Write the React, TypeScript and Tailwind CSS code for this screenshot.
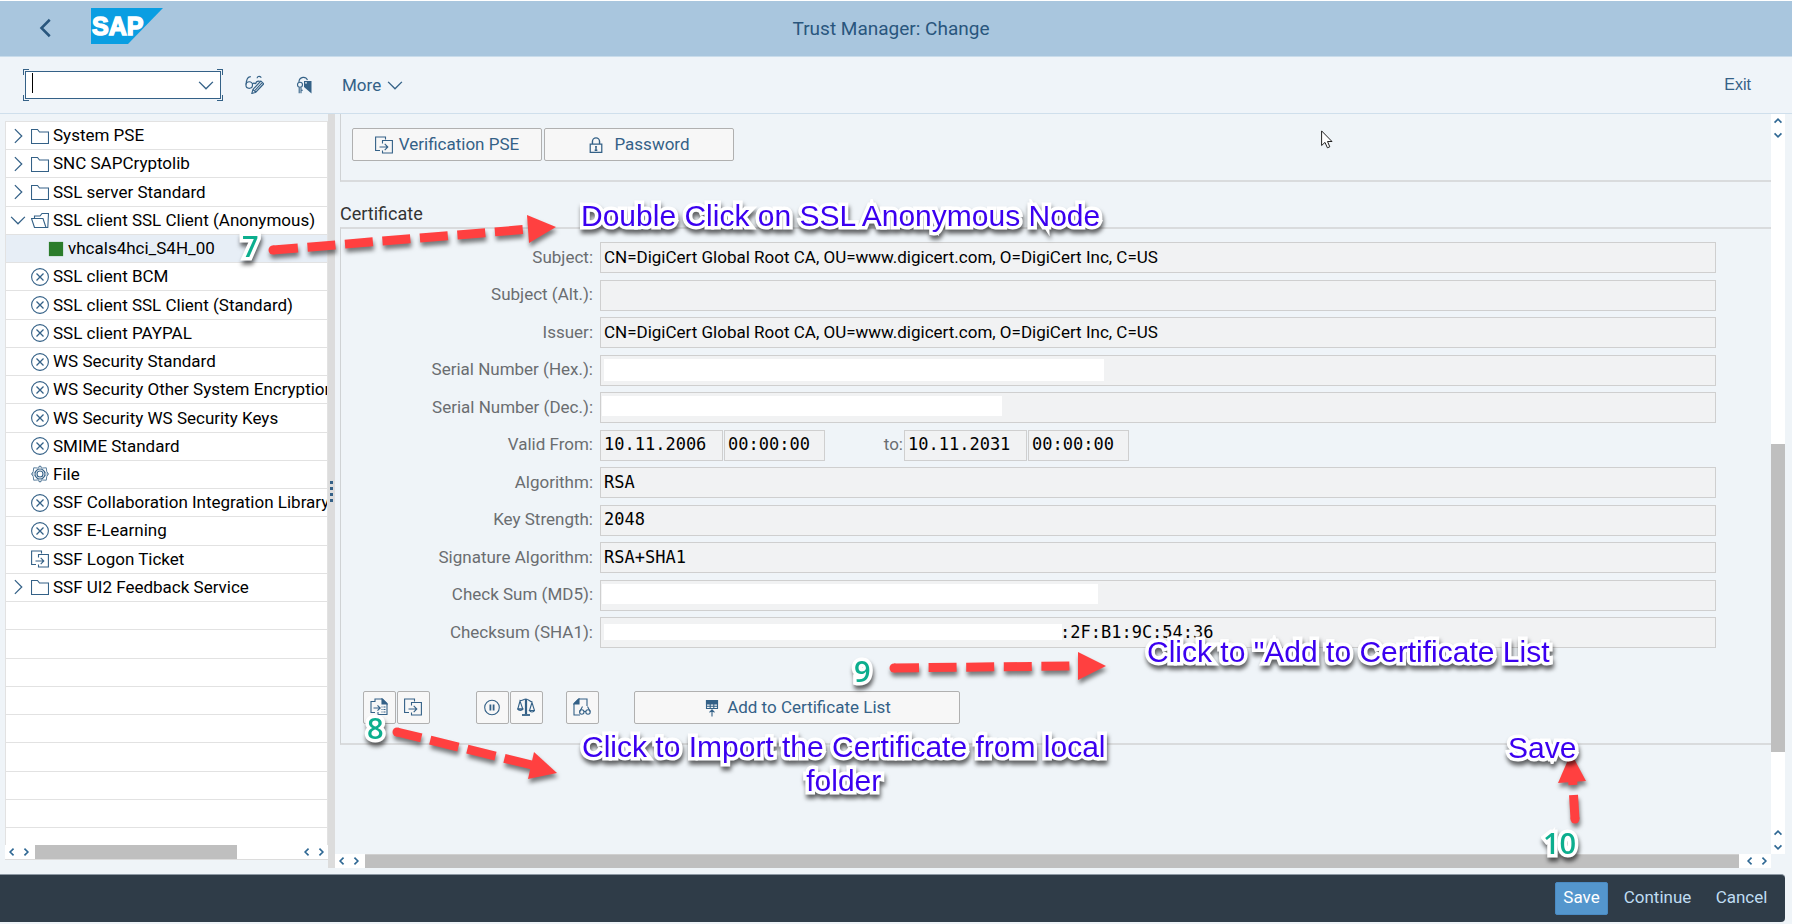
import React from 'react';

type IconName =
  | 'folder' | 'folderOpen' | 'cross' | 'file' | 'import' | 'square'
  | 'lock' | 'importDoc' | 'pause' | 'scale' | 'docGlasses' | 'addList' | 'glassesPen' | 'keyTag';

function Icon({ name, className = 'size-[18px]' }: { name: IconName; className?: string }) {
  const shapes: Record<IconName, React.ReactNode> = {
    folder: <path d="M.5 16.500V2.500H6.500L8.500 5H17.500V16.500Z" />,
    folderOpen: <path d="M3.500 16.500L.5 7.500H12L15 16.500ZM3.500 7.500V5H9L11 2.500H17.500L16.800 16.500H15" />,
    cross: (
      <>
        <circle cx="9" cy="9" r="8.400" />
        <path d="M5.500 5.500l7 7M12.500 5.500l-7 7" strokeWidth="1.300" />
      </>
    ),
    file: (
      <>
        <circle cx="9" cy="9" r="3" />
        <circle cx="9" cy="9" r="5" />
        <path d="M9 .8l2.500 2.200 3.800-.2.400 3.600 1.800 2.600-1.800 2.600-.4 3.600-3.800-.2L9 17.200l-2.500-2.200-3.800.2-.4-3.600L.5 9l1.800-2.600.4-3.600 3.800.2z" strokeWidth=".8" />
        <path d="M9 1l3.400 5L17 9l-4.600 3L9 17l-3.400-5L1 9l4.600-3z" strokeWidth=".5" />
      </>
    ),
    import: (
      <>
        <path d="M5 14.500H.6V1H10.500V3.500" />
        <path d="M7.500 7.500V4.500H17.400V17H7.500V14.500" />
        <path d="M4.500 11H12.500M9.700 7.800L12.800 11 9.700 14.200" />
      </>
    ),
    square: <rect x="1" y="1" width="16" height="16" fill="#2b7c2b" stroke="none" />,
    lock: (
      <>
        <path d="M2.500 8h13v9.300h-13z" strokeWidth="1.400" />
        <path d="M5 8V5a4 4 0 0 1 8 0v3" strokeWidth="1.600" />
        <path d="M9 10.800v4M7.500 15h3M8 11h2" strokeWidth="1.600" />
      </>
    ),
    importDoc: (
      <>
        <path d="M5 14.500H1V3.500H5V1H12.500L17 5.500V16.500H8V14" />
        <path d="M12 1v5h5z" fill="currentColor" />
        <path d="M3.500 10H10M7.500 7.300L10.200 10 7.500 12.700M11.500 9h1M13.500 9h2M11.500 11.500h1M13.500 11.500h2M11.500 14h1M13.500 14h2" />
      </>
    ),
    pause: (
      <>
        <circle cx="9" cy="9.500" r="7.300" />
        <path d="M7.400 6.500v6M10.600 6.500v6" strokeWidth="1.800" />
      </>
    ),
    scale: (
      <>
        <path d="M9 1v15" strokeWidth="2.200" />
        <path d="M5 17h8" strokeWidth="1.800" />
        <path d="M2.500 2.500c2 .8 4-1.500 6.500-1.500s4 3 6.500 3M3 3L.8 11h5zM15 4.500l-2.500 8h5z" />
        <path d="M.8 11a2.600 2 0 0 0 5 0zM12.500 12.500a2.600 2 0 0 0 5 0z" />
      </>
    ),
    docGlasses: (
      <>
        <path d="M7 17H1V5.500L5.500 1H14V8" />
        <path d="M1 6h5V1z" fill="currentColor" />
        <circle cx="8.800" cy="14" r="2.200" />
        <circle cx="15" cy="14" r="2.200" />
        <path d="M11 13.500h2M6.800 13.500L9.500 8.500M17.200 13.500L14.500 8.500" />
      </>
    ),
    addList: (
      <>
        <path d="M3.500 1.500h11v8h-11z" />
        <path d="M3.500 1.500h11V5h-11z" fill="currentColor" />
        <path d="M3.500 7.300h11M7.200 5v4.500M10.800 5v4.500M9 17.500V10.500M6.500 13.300L9 10.800l2.500 2.500" />
      </>
    ),
    glassesPen: (
      <>
        <circle cx="4" cy="9.500" r="3.100" />
        <path d="M1 9C1.200 5 2.500 1.500 5.500 1.500M7 8.500c1-1 2-1 3 0M10 8.500c.5-2 2-3 4-2.500M15.500 2.500C13.500.5 11.500 1.500 11.500 3" />
        <path d="M6.500 17.500l1-3.800 7.500-8 2.800 2.600-7.600 8zM7.500 13.700l2.700 2.600M9.500 14.500l6.800-7.200" />
      </>
    ),
    keyTag: (
      <>
        <path d="M4 6V5A4.500 4.500 0 0 1 12.500 4" />
        <circle cx="5" cy="8.800" r="2.500" />
        <path d="M4.200 11.500V17.300M6 11.500V17.300M6 14.300h1.800" />
        <path d="M9 5h7.500v12.500L9 11z" fill="currentColor" stroke="none" />
        <circle cx="11" cy="6.800" r=".9" fill="#eff4f9" stroke="none" />
      </>
    ),
  };
  return (
    <svg viewBox="0 0 18 18" className={`${className} shrink-0`} fill="none" stroke="currentColor" strokeWidth="1.100" aria-hidden="true">
      {shapes[name]}
    </svg>
  );
}

const chevronPaths = {
  left: 'M10.500 2.500L5 8l5.500 5.500',
  right: 'M5.500 2.500L11 8l-5.500 5.500',
  up: 'M2.500 10.500L8 5l5.500 5.500',
  down: 'M2.500 5.500L8 11l5.500-5.500',
};

function Chevron({ dir, className, width = 1.2 }: { dir: keyof typeof chevronPaths; className: string; width?: number }) {
  return (
    <svg viewBox="0 0 16 16" className={className} fill="none" stroke="currentColor" strokeWidth={width} aria-hidden="true">
      <path d={chevronPaths[dir]} />
    </svg>
  );
}

function ScrollButton({ dir }: { dir: keyof typeof chevronPaths }) {
  return (
    <button type="button" aria-label={`Scroll ${dir}`} className="flex size-[14px] shrink-0 items-center justify-center text-[#2f6894]">
      <Chevron dir={dir} className="size-[10px]" width={2.6} />
    </button>
  );
}

type Node = { label: string; icon: IconName; state?: 'open' | 'closed'; child?: boolean };

const nodes: Node[] = [
  { label: 'System PSE', icon: 'folder', state: 'closed' },
  { label: 'SNC SAPCryptolib', icon: 'folder', state: 'closed' },
  { label: 'SSL server Standard', icon: 'folder', state: 'closed' },
  { label: 'SSL client SSL Client (Anonymous)', icon: 'folderOpen', state: 'open' },
  { label: 'vhcals4hci_S4H_00', icon: 'square', child: true },
  { label: 'SSL client BCM', icon: 'cross' },
  { label: 'SSL client SSL Client (Standard)', icon: 'cross' },
  { label: 'SSL client PAYPAL', icon: 'cross' },
  { label: 'WS Security Standard', icon: 'cross' },
  { label: 'WS Security Other System Encryption', icon: 'cross' },
  { label: 'WS Security WS Security Keys', icon: 'cross' },
  { label: 'SMIME Standard', icon: 'cross' },
  { label: 'File', icon: 'file' },
  { label: 'SSF Collaboration Integration Library', icon: 'cross' },
  { label: 'SSF E-Learning', icon: 'cross' },
  { label: 'SSF Logon Ticket', icon: 'import' },
  { label: 'SSF UI2 Feedback Service', icon: 'folder', state: 'closed' },
];

const blankRows = Array.from({ length: 9 }, (_, i) => i);

function Tree() {
  return (
    <nav aria-label="Certificate stores" className="flex w-[328px] shrink-0 flex-col pt-[7px] pb-2 pl-[5px]">
      <ul className="grid flex-1 grid-rows-[repeat(25,minmax(28px,1fr))_18px] border-x border-[#e2e2e2] bg-white">
        {nodes.map((n) => (
          <li
            key={n.label}
            className={`flex min-w-0 items-center overflow-hidden border-t border-[#e2e2e2] text-black ${n.child ? 'bg-[#e7eef6]' : ''}`}
          >
            {n.state ? (
              <button type="button" aria-label={`Toggle ${n.label}`} className="mr-[2px] flex w-[23px] shrink-0 justify-center text-[#346187]">
                <Chevron dir={n.state === 'open' ? 'down' : 'right'} className="size-5 shrink-0" width={1} />
              </button>
            ) : (
              <span className={n.child ? 'w-[42px] shrink-0' : 'w-[25px] shrink-0'} />
            )}
            <span className="flex items-center gap-1 text-[#346187]">
              <Icon name={n.icon} className={n.child ? 'size-4' : 'size-[18px]'} />
              <a href="#" className="pb-px whitespace-nowrap text-black">{n.label}</a>
            </span>
          </li>
        ))}
        {blankRows.map((i) => (
          <li key={i} className="border-t border-[#e2e2e2]" />
        ))}
      </ul>
      <div className="flex h-[15px] border-b border-[#dcdcdc] bg-white">
        <ScrollButton dir="left" />
        <ScrollButton dir="right" />
        <div className="ml-[2px] flex flex-1">
          <div className="grow-[202] bg-[#bfbfbf]" />
          <div className="grow-[63]" />
        </div>
        <ScrollButton dir="left" />
        <ScrollButton dir="right" />
      </div>
    </nav>
  );
}

const btn = 'flex h-[33px] items-center justify-center rounded-[2px] border border-[#b0b0b0] bg-[#f7f7f7] text-[#346187]';
const fieldCls =
  'block h-[31px] w-full border border-[#cfcfcf] bg-[#f1f2f3] px-[3px] pb-[2px] text-black outline-none';
const labelCls = 'shrink-0 pb-[2px] text-right text-[#6a6d70]';
const mono = "font-['DejaVu_Sans_Mono',monospace]";

type FieldProps = { id: string; label: string; value?: string; monospace?: boolean; mask?: string; pad?: string };

function Field({ id, label, value = '', monospace, mask, pad = '' }: FieldProps) {
  return (
    <div className="flex h-[31px] items-center gap-[7px]">
      <label htmlFor={id} className={`${labelCls} w-[252px]`}>{label}</label>
      <div className="relative flex-1">
        <input id={id} readOnly value={value} className={`${fieldCls} ${monospace ? mono : ''} ${pad}`} />
        {mask && <span className={`absolute bg-white ${mask}`} />}
      </div>
    </div>
  );
}

function ValidityField({ label, value, width }: { label: string; value: string; width: string }) {
  return <input aria-label={label} readOnly value={value} className={`${fieldCls} ${mono} ${width}`} />;
}

function Validity() {
  return (
    <div className="flex h-[31px] items-center gap-[7px]">
      <label htmlFor="valid-from" className={`${labelCls} w-[252px]`}>Valid From:</label>
      <div className="flex items-center gap-px">
        <input id="valid-from" readOnly value="10.11.2006" className={`${fieldCls} ${mono} max-w-[123px]`} />
        <ValidityField label="Valid from time" value="00:00:00" width="max-w-[101px]" />
        <label htmlFor="valid-to" className={`${labelCls} w-[77px]`}>to:</label>
        <input id="valid-to" readOnly value="10.11.2031" className={`${fieldCls} ${mono} max-w-[123px]`} />
        <ValidityField label="Valid to time" value="00:00:00" width="max-w-[101px]" />
      </div>
    </div>
  );
}

function IconButton({ name, label, className = '' }: { name: IconName; label: string; className?: string }) {
  return (
    <button type="button" aria-label={label} className={`${btn} w-[33px] pr-[2px] pb-[2px] ${className}`}>
      <Icon name={name} />
    </button>
  );
}

const subject = 'CN=DigiCert Global Root CA, OU=www.digicert.com, O=DigiCert Inc, C=US';

function Details() {
  return (
    <div className="flex min-w-0 flex-1 flex-col">
      <div className="flex flex-1">
        <main className="flex-1 pl-[5px]">
          <section className="flex gap-[2px] border-b-2 border-l border-b-[#d9dbdd] border-l-[#cfd2d4] pt-[14px] pb-[19px] pl-[11px]">
            <button type="button" className={`${btn} w-[190px] gap-[6px]`}>
              <Icon name="import" /><span className="pb-[2px]">Verification PSE</span>
            </button>
            <button type="button" className={`${btn} w-[190px] gap-[10px]`}>
              <Icon name="lock" className="size-4" /><span className="pb-[2px]">Password</span>
            </button>
          </section>
          <h2 className="h-[45px] pt-5 text-[18px] leading-6 text-[#333]">Certificate</h2>
          <section className="border-y-2 border-l border-y-[#d9dbdd] border-l-[#cfd2d4] pt-[13px] pb-[19px]">
            <form className="flex min-h-[406px] flex-col justify-between pr-[55px]">
              <Field id="subject" label="Subject:" value={subject} />
              <Field id="subject-alt" label="Subject (Alt.):" />
              <Field id="issuer" label="Issuer:" value={subject} />
              <Field id="serial-hex" label="Serial Number (Hex.):" mask="top-1 left-1 h-[22px] w-[500px]" />
              <Field id="serial-dec" label="Serial Number (Dec.):" mask="top-1 left-[2px] h-5 w-[400px]" />
              <Validity />
              <Field id="algorithm" label="Algorithm:" value="RSA" monospace />
              <Field id="key-strength" label="Key Strength:" value="2048" monospace />
              <Field id="signature" label="Signature Algorithm:" value="RSA+SHA1" monospace />
              <Field id="md5" label="Check Sum (MD5):" mask="top-1 left-[2px] h-5 w-[496px]" />
              <Field id="sha1" label="Checksum (SHA1):" value=":2F:B1:9C:54:36" monospace mask="top-[7px] left-1 h-4 w-[458px]" pad="pl-[459px]" />
            </form>
            <div className="mt-[43px] flex pl-[22px]">
              <IconButton name="importDoc" label="Import certificate" />
              <IconButton name="import" label="Export certificate" className="ml-px" />
              <IconButton name="pause" label="Pause" className="ml-[46px]" />
              <IconButton name="scale" label="Compare" className="ml-px" />
              <IconButton name="docGlasses" label="Display certificate" className="ml-[23px]" />
              <button type="button" className={`${btn} ml-[35px] w-[326px] gap-[6px]`}>
                <Icon name="addList" /><span className="pb-[2px]">Add to Certificate List</span>
              </button>
            </div>
          </section>
        </main>
        <div className="flex w-[14px] flex-col bg-white">
          <ScrollButton dir="up" />
          <ScrollButton dir="down" />
          <div className="grow-[302]" />
          <div className="grow-[308] bg-[#bfbfbf]" />
          <div className="grow-[74]" />
          <ScrollButton dir="up" />
          <ScrollButton dir="down" />
        </div>
      </div>
      <div className="mr-[14px] flex h-[14px] bg-white">
        <ScrollButton dir="left" />
        <ScrollButton dir="right" />
        <div className="mr-1 ml-[2px] flex-1 border-t border-[#cfcfcf] bg-[#bfbfbf]" />
        <ScrollButton dir="left" />
        <ScrollButton dir="right" />
      </div>
    </div>
  );
}

function CommandField() {
  const corner = 'absolute size-[6px] border-[#346187]';
  return (
    <div className="relative ml-[23px] flex h-[32px] w-[200px] shrink-0 p-[2px]">
      <div className="flex min-w-0 flex-1 items-center border border-[#346187] bg-white">
        <span className="mt-px ml-[6px] h-5 w-px self-start bg-black" />
        <input aria-label="Command" className="w-full min-w-0 flex-1 bg-transparent outline-none" />
        <button type="button" aria-label="Open command list" className="mr-1 shrink-0 text-[#346187]">
          <Chevron dir="down" className="size-5" width={1.1} />
        </button>
      </div>
      <span className={`${corner} top-0 left-0 border-t border-l`} />
      <span className={`${corner} top-0 right-0 border-t border-r`} />
      <span className={`${corner} bottom-0 left-0 border-b border-l`} />
      <span className={`${corner} right-0 bottom-0 border-r border-b`} />
    </div>
  );
}

type ArrowSpec = { x1: number; y1: number; x2: number; y2: number; dash: string; offset: number; head: string };

const arrows: ArrowSpec[] = [
  { x1: 273, y1: 250, x2: 530, y2: 229, dash: '28 9.600', offset: 3, head: '527,215 556,227 529,243' },
  { x1: 397, y1: 732, x2: 532, y2: 765, dash: '29 9.200', offset: 4, head: '534,752 557,773 528,779' },
  { x1: 894, y1: 668, x2: 1070, y2: 666, dash: '28 9.600', offset: 3, head: '1078,652 1106,666 1078,680' },
  { x1: 1575, y1: 819, x2: 1572, y2: 770, dash: '28 10', offset: 4, head: '1558,783 1571,753 1586,781' },
];

function Callout({ children, className }: { children: React.ReactNode; className: string }) {
  return (
    <p
      className={`absolute text-center whitespace-nowrap [-webkit-text-stroke:7px_white] [paint-order:stroke_fill] [filter:drop-shadow(1px_4px_2px_rgba(0,0,0,.6))] [stroke-linejoin:round] ${className}`}
    >
      {children}
    </p>
  );
}

function Annotations() {
  const note = "font-['Liberation_Sans',Arial,sans-serif] text-[30px] leading-[34px] text-[#3b00f0]";
  const step = "font-['Open_Sans',sans-serif] text-[29px] leading-[34px] font-semibold text-[#0cae8e]";
  return (
    <div className="pointer-events-none absolute inset-0 overflow-hidden">
      <svg className="absolute inset-0 size-full [filter:drop-shadow(1px_4px_2px_rgba(0,0,0,.5))]" aria-hidden="true">
        {arrows.map((a) => (
          <g key={a.head} fill="#ff4040" stroke="#ff4040">
            <circle cx={a.x1} cy={a.y1} r="4.500" stroke="none" />
            <line x1={a.x1} y1={a.y1} x2={a.x2} y2={a.y2} strokeWidth="9" strokeDasharray={a.dash} strokeDashoffset={a.offset} />
            <polygon points={a.head} stroke="none" />
          </g>
        ))}
      </svg>
      <Callout className={`top-[199px] left-[581px] ${note}`}>Double Click on SSL Anonymous Node</Callout>
      <Callout className={`top-[635px] left-[1147px] ${note}`}>Click to "Add to Certificate List</Callout>
      <Callout className={`top-[730px] left-[582px] ${note}`}>Click to Import the Certificate from local<br />folder</Callout>
      <Callout className={`top-[731px] left-[1508px] ${note}`}>Save</Callout>
      <Callout className={`top-[229px] left-[242px] ${step}`}>7</Callout>
      <Callout className={`top-[711px] left-[367px] ${step}`}>8</Callout>
      <Callout className={`top-[654px] left-[854px] ${step}`}>9</Callout>
      <Callout className={`top-[826px] left-[1543px] ${step}`}>10</Callout>
      <svg viewBox="0 0 12 19" className="absolute top-[130px] left-[1321px] h-[19px] w-3" aria-hidden="true">
        <path d="M.6.900V15.500L4 12.400 6.400 17.800 8.800 16.800 6.500 11.500H11z" fill="#fff" stroke="#222" strokeWidth="1" />
      </svg>
    </div>
  );
}

export default function App() {
  return (
    <div className="relative flex min-h-screen flex-col bg-white pt-px pr-3 font-['Roboto',sans-serif] text-[17px] leading-6">
      <header className="grid h-14 grid-cols-[1fr_auto_1fr] items-center border-b border-[#c9dceb] bg-[#a9c6de] pr-[10px] text-[#29567d]">
        <div className="flex items-center pb-[6px]">
          <button type="button" aria-label="Back" className="mt-1 ml-[34px] text-[#29567d]">
            <Chevron dir="left" className="size-6" width={1.7} />
          </button>
          <svg viewBox="0 0 72 36" className="ml-[33px] h-9 w-[72px]" role="img" aria-label="SAP">
            <polygon points="0,0 72,0 37,36 0,36" fill="#0a9ee2" />
            <text x="1" y="27" fontFamily="Liberation Sans, Arial, sans-serif" fontWeight="700" fontSize="25" fill="#fff" stroke="#fff" strokeWidth="1.500">SAP</text>
          </svg>
        </div>
        <h1 className="text-[19px]">Trust Manager: Change</h1>
        <span />
      </header>
      <div className="flex h-[57px] items-center border-b border-[#cfdfec] bg-[#eff4f9] pb-px text-[#346187]">
        <CommandField />
        <button type="button" aria-label="Display or change" className="ml-[22px]"><Icon name="glassesPen" className="size-[19px]" /></button>
        <button type="button" aria-label="Certificates" className="ml-[31px]"><Icon name="keyTag" /></button>
        <button type="button" className="ml-[29px] flex items-center gap-1">More<Chevron dir="down" className="size-5" width={1.1} /></button>
        <button type="button" className="mr-[41px] ml-auto font-['Liberation_Sans',Arial,sans-serif] text-[16px]">Exit</button>
      </div>
      <div className="flex flex-1 bg-[#eff4f8] pr-[7px] pb-[6px]">
        <Tree />
        <div className="flex w-[7px] shrink-0 flex-col items-center justify-center gap-[3px] bg-[#dcdcdc]">
          <span className="size-[3px] bg-[#346187]" />
          <span className="size-[3px] bg-[#346187]" />
          <span className="size-[3px] bg-[#346187]" />
          <span className="size-[3px] bg-[#346187]" />
        </div>
        <Details />
      </div>
      <div className="bg-[#eff4f8] pr-[7px] pb-[2px]">
        <footer className="flex h-12 items-center justify-end rounded-r-[4px] border-t border-[#8d98a3] bg-[#2f3c48] pr-[9px] pb-px text-[#bfdcf2]">
          <button type="button" className="h-[33px] w-[53px] rounded-[2px] border border-[#4a8ac2] bg-[#5496cd] pb-[2px] text-white">Save</button>
          <button type="button" className="ml-[7px] h-[33px] w-[85px] pb-[2px]">Continue</button>
          <button type="button" className="ml-[7px] h-[33px] w-[69px] pb-[2px]">Cancel</button>
        </footer>
      </div>
      <Annotations />
    </div>
  );
}
